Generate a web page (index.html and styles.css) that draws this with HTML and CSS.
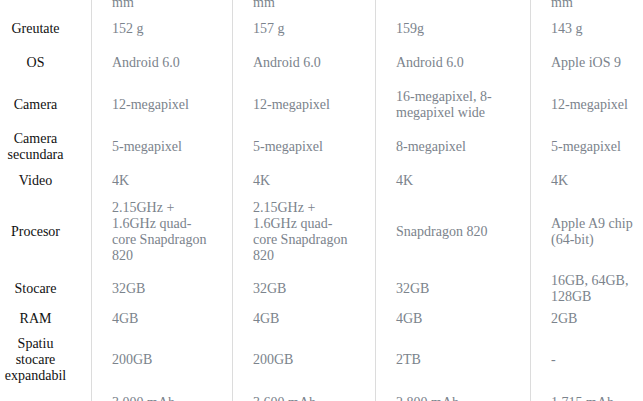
FILE: index.html
```html
<!DOCTYPE html>
<html lang="ro">
<head>
<meta charset="utf-8">
<title>Comparatie specificatii</title>
<link rel="stylesheet" href="styles.css">
</head>
<body>
<div class="viewport">
<table class="specs">
  <colgroup>
    <col class="c-label">
    <col class="c-1">
    <col class="c-2">
    <col class="c-3">
    <col class="c-4">
  </colgroup>
  <tbody>
    <tr class="r-dims">
      <td class="label">Dimensiuni</td>
      <td class="val">142.4x69.6x7.9 mm</td>
      <td class="val">150.9x72.6x7.7 mm</td>
      <td class="val">149.4x73.9x7.7mm</td>
      <td class="val">138.3x67.1x7.1 mm</td>
    </tr>
    <tr class="r-greutate">
      <td class="label">Greutate</td>
      <td class="val">152 g</td>
      <td class="val">157 g</td>
      <td class="val">159g</td>
      <td class="val">143 g</td>
    </tr>
    <tr class="r-os">
      <td class="label">OS</td>
      <td class="val">Android 6.0</td>
      <td class="val">Android 6.0</td>
      <td class="val">Android 6.0</td>
      <td class="val">Apple iOS 9</td>
    </tr>
    <tr class="r-camera">
      <td class="label">Camera</td>
      <td class="val">12-megapixel</td>
      <td class="val">12-megapixel</td>
      <td class="val">16-megapixel, 8-megapixel wide</td>
      <td class="val">12-megapixel</td>
    </tr>
    <tr class="r-camsec">
      <td class="label">Camera secundara</td>
      <td class="val">5-megapixel</td>
      <td class="val">5-megapixel</td>
      <td class="val">8-megapixel</td>
      <td class="val">5-megapixel</td>
    </tr>
    <tr class="r-video">
      <td class="label">Video</td>
      <td class="val">4K</td>
      <td class="val">4K</td>
      <td class="val">4K</td>
      <td class="val">4K</td>
    </tr>
    <tr class="r-procesor">
      <td class="label">Procesor</td>
      <td class="val">2.15GHz + 1.6GHz quad-core Snapdragon 820</td>
      <td class="val">2.15GHz + 1.6GHz quad-core Snapdragon 820</td>
      <td class="val">Snapdragon 820</td>
      <td class="val">Apple A9 chip (64-bit)</td>
    </tr>
    <tr class="r-stocare">
      <td class="label">Stocare</td>
      <td class="val">32GB</td>
      <td class="val">32GB</td>
      <td class="val">32GB</td>
      <td class="val">16GB, 64GB, 128GB</td>
    </tr>
    <tr class="r-ram">
      <td class="label">RAM</td>
      <td class="val">4GB</td>
      <td class="val">4GB</td>
      <td class="val">4GB</td>
      <td class="val">2GB</td>
    </tr>
    <tr class="r-spatiu">
      <td class="label">Spatiu stocare expandabil</td>
      <td class="val">200GB</td>
      <td class="val">200GB</td>
      <td class="val">2TB</td>
      <td class="val">-</td>
    </tr>
    <tr class="r-baterie">
      <td class="label">Baterie</td>
      <td class="val">3.000 mAh</td>
      <td class="val">3.600 mAh</td>
      <td class="val">2.800 mAh</td>
      <td class="val">1.715 mAh</td>
    </tr>
  </tbody>
</table>
</div>
</body>
</html>
```

FILE: styles.css
```css
html, body {
  margin: 0;
  padding: 0;
  background: #ffffff;
  overflow: hidden;
}

.viewport {
  width: 643px;
  height: 401px;
  overflow: hidden;
}

.specs {
  table-layout: fixed;
  width: 670px;
  border-collapse: separate;
  border-spacing: 0;
  margin-top: -29px;
  font-family: "Liberation Serif", Tinos, "Times New Roman", Times, "DejaVu Serif", "Noto Serif", serif;
  font-size: 14px;
  line-height: 16px;
}

.c-label { width: 91px; }
.c-1 { width: 141px; }
.c-2 { width: 143px; }
.c-3 { width: 155px; }
.c-4 { width: 140px; }

.specs td {
  vertical-align: middle;
  padding: 0 20px;
  font-family: inherit;
}

.specs .label {
  padding: 0 20px 0 0;
  text-align: center;
  color: #111111;
}

.specs .val {
  text-align: left;
  color: #7b838c;
  border-left: 1px solid #dcdcdc;
}

.r-dims { height: 47px; }
.r-greutate { height: 22px; }
.r-os { height: 46px; }
.r-camera { height: 38px; }
.r-camsec { height: 45px; }
.r-video { height: 24px; }
.r-procesor { height: 77px; }
.r-stocare { height: 38px; }
.r-ram { height: 22px; }
.r-spatiu { height: 60px; }
.r-baterie { height: 60px; }

.r-baterie .val {
  vertical-align: top;
  padding-top: 5px;
}
```
